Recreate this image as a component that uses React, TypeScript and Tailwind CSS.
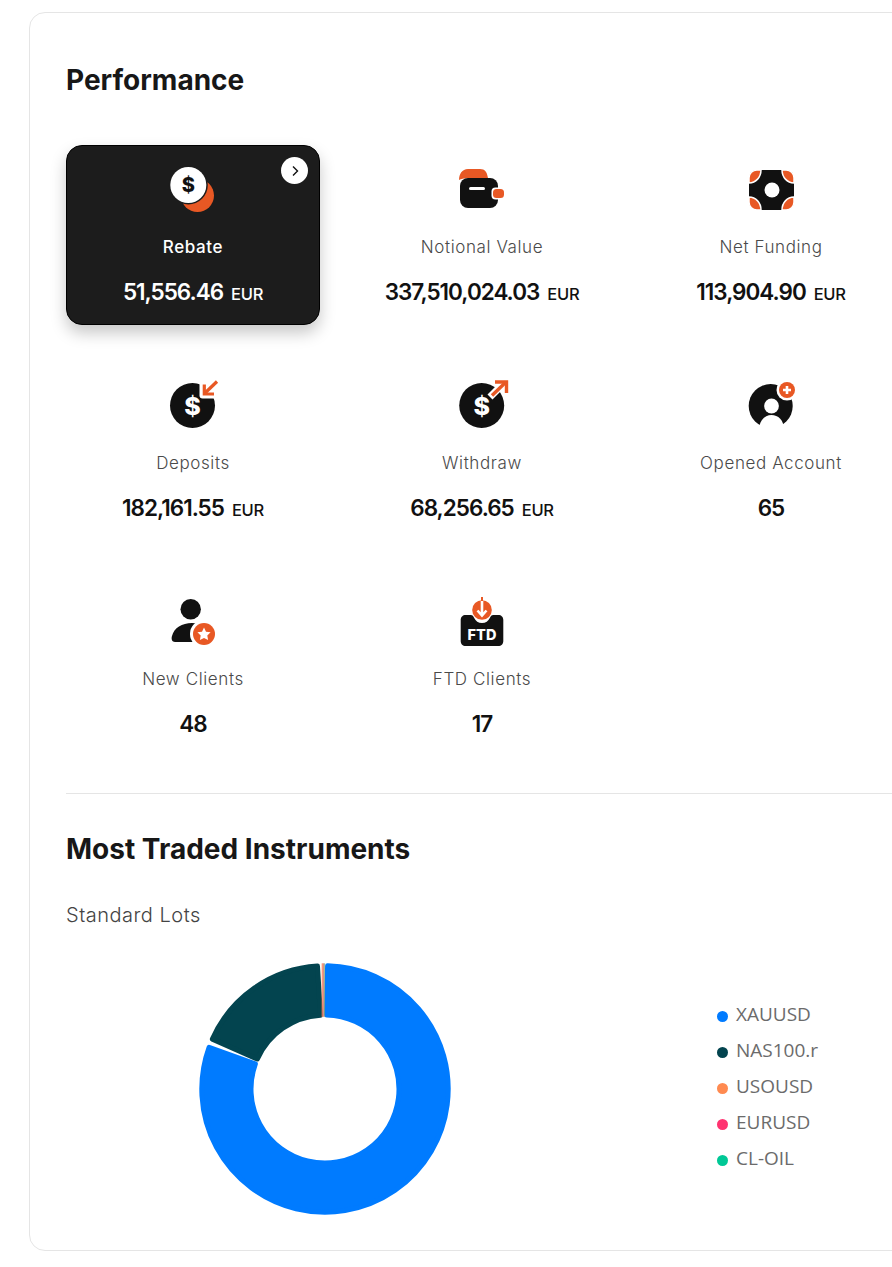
const F = "font-['Inter','Liberation_Sans',sans-serif]";

const O = "#e85824";
const K = "#111111";

function Dollar({ x, y, size, fill }: { x: number; y: number; size: number; fill: string }) {
  return (
    <text x={x} y={y} fontSize={size} fontWeight={800} textAnchor="middle" fill={fill} fontFamily="Inter, sans-serif">
      $
    </text>
  );
}

function Icon({ children }: { children: React.ReactNode }) {
  return (
    <svg width="60" height="60" viewBox="0 0 60 60" className="block shrink-0">
      {children}
    </svg>
  );
}

const corner = "M8 23V18a8 8 0 0 1 8-8H20c0 7-5 13-12 13z";

const icons: Record<string, React.ReactNode> = {
  rebate: (
    <Icon>
      <circle cx="34.500" cy="35.500" r="16.500" fill={O} />
      <circle cx="25.300" cy="25" r="19.500" fill="#1c1c1c" />
      <circle cx="25.300" cy="25" r="18" fill="#fff" />
      <Dollar x={25.3} y={32} size={20} fill={K} />
    </Icon>
  ),
  wallet: (
    <Icon>
      <path d="M7 20c0-6 3-11 9-11h12c5 0 7 3 8 9H16c-4 0-7 1-9 2z" fill={O} />
      <rect x="8" y="18" width="38" height="30" rx="8" fill={K} />
      <rect x="39.500" y="27.500" width="14" height="12" rx="4" fill="#fff" />
      <rect x="41" y="29" width="11" height="9" rx="3.500" fill={O} />
      <rect x="17" y="27" width="16" height="3" rx="1.500" fill="#fff" />
    </Icon>
  ),
  funding: (
    <Icon>
      <rect x="8" y="10" width="45" height="40" rx="8" fill={K} />
      <path d={corner} fill={O} stroke="#fff" strokeWidth="1.500" />
      <path d={corner} fill={O} stroke="#fff" strokeWidth="1.500" transform="translate(61 0) scale(-1 1)" />
      <path d={corner} fill={O} stroke="#fff" strokeWidth="1.500" transform="translate(0 60) scale(1 -1)" />
      <path d={corner} fill={O} stroke="#fff" strokeWidth="1.500" transform="translate(61 60) scale(-1 -1)" />
      <circle cx="31" cy="30" r="7.500" fill="#fff" />
    </Icon>
  ),
  deposits: (
    <Icon>
      <circle cx="29.500" cy="29.500" r="22.500" fill={K} />
      <rect x="36.500" y="2" width="22" height="20.500" rx="3" fill="#fff" />
      <Dollar x={29.5} y={38.500} size={25} fill="#fff" />
      <path d="M41.500 17.500L54 5.500" stroke={O} strokeWidth="3.200" fill="none" />
      <path d="M41.300 8.500V18H51" stroke={O} strokeWidth="3.200" fill="none" />
    </Icon>
  ),
  withdraw: (
    <Icon>
      <circle cx="29.700" cy="29.500" r="22.500" fill={K} />
      <path d="M38 21L50 9" stroke="#fff" strokeWidth="7" fill="none" />
      <Dollar x={29.7} y={38.500} size={25} fill="#fff" />
      <path d="M40 19.500L54 6" stroke={O} strokeWidth="3.400" fill="none" />
      <path d="M43 6h11.500v11" stroke={O} strokeWidth="3.400" fill="none" />
    </Icon>
  ),
  account: (
    <Icon>
      <circle cx="29.700" cy="30" r="22" fill={K} />
      <circle cx="30.500" cy="30" r="7.400" fill="#fff" />
      <path d="M18 54C18 44 24 39 30.500 39S43 44 43 54z" fill="#fff" />
      <circle cx="46" cy="14" r="10.500" fill="#fff" />
      <circle cx="46" cy="14" r="8" fill={O} />
      <path d="M42 14h8M46 10v8" stroke="#fff" strokeWidth="2.600" strokeLinecap="butt" />
    </Icon>
  ),
  clients: (
    <Icon>
      <circle cx="27.700" cy="17.300" r="10.200" fill={K} />
      <path d="M12 50c-3 0-4-3-3-6 2-8 10-13 20-13 9 0 14 3 14 8 0 6-3 11-9 11z" fill={K} />
      <circle cx="41" cy="42" r="14" fill="#fff" />
      <circle cx="41" cy="42" r="11" fill={O} />
      <path d="M41 35.500l2 4.200 4.600.6-3.300 3.200.8 4.600-4.100-2.200-4.100 2.200.8-4.600-3.300-3.200 4.600-.6z" fill="#fff" />
    </Icon>
  ),
  ftd: (
    <Icon>
      <path d="M8.700 28c0-3 2-5 5-5h5c2 0 2.500 1 3.500 3 1.500 3 4 5 7.800 5s6.300-2 7.800-5c1-2 1.500-3 3.500-3h5c3 0 5 2 5 5v21c0 3-2 5-5 5H13.700c-3 0-5-2-5-5z" fill={K} />
      <circle cx="30" cy="18" r="9.800" fill={O} />
      <path d="M30 9v14M25.500 18.500l4.500 5 4.500-5" stroke="#fff" strokeWidth="2.600" fill="none" />
      <path d="M30 5v4" stroke={O} strokeWidth="2" />
      <text x="30" y="48" textAnchor="middle" fontSize="14.500" fontWeight={800} fill="#fff" fontFamily="Inter, sans-serif">FTD</text>
    </Icon>
  ),
};

const stats = [
  { icon: "rebate", label: "Rebate", value: "51,556.46", unit: "EUR", active: true },
  { icon: "wallet", label: "Notional Value", value: "337,510,024.03", unit: "EUR" },
  { icon: "funding", label: "Net Funding", value: "113,904.90", unit: "EUR" },
  { icon: "deposits", label: "Deposits", value: "182,161.55", unit: "EUR" },
  { icon: "withdraw", label: "Withdraw", value: "68,256.65", unit: "EUR" },
  { icon: "account", label: "Opened Account", value: "65" },
  { icon: "clients", label: "New Clients", value: "48" },
  { icon: "ftd", label: "FTD Clients", value: "17" },
];

function pt(r: number, a: number) {
  const t = (a * Math.PI) / 180;
  return `${(130 + r * Math.sin(t)).toFixed(2)} ${(130 - r * Math.cos(t)).toFixed(2)}`;
}

function sector(a0: number, a1: number, ro: number, ri: number) {
  const large = a1 - a0 > 180 ? 1 : 0;
  return `M${pt(ro, a0)}A${ro} ${ro} 0 ${large} 1 ${pt(ro, a1)}L${pt(ri, a1)}A${ri} ${ri} 0 ${large} 0 ${pt(ri, a0)}Z`;
}

function Donut() {
  return (
    <svg width="260" height="260" viewBox="0 0 260 260" className="block shrink-0">
      <path d={sector(1.2, 289.8, 123.2, 74)} fill="#007bff" stroke="#007bff" strokeWidth="5" strokeLinejoin="round" />
      <path d={sector(293.9, 356.5, 123.2, 74)} fill="#03444f" stroke="#03444f" strokeWidth="5" strokeLinejoin="round" />
      <rect x="126.700" y="4.300" width="1" height="53.500" fill="#ff8a50" />
      <rect x="127.700" y="4.300" width="1" height="53.500" fill="#f5606a" />
      <rect x="128.700" y="4.300" width="1" height="53.500" fill="#7fa070" />
    </svg>
  );
}

const legend = [
  ["XAUUSD", "bg-[#007bff]"],
  ["NAS100.r", "bg-[#03444f]"],
  ["USOUSD", "bg-[#ff8a50]"],
  ["EURUSD", "bg-[#ff3370]"],
  ["CL-OIL", "bg-[#00c896]"],
];

export default function App() {
  return (
    <div className={`h-[1267px] w-[892px] overflow-hidden bg-white pl-[29px] pt-3 ${F}`}>
      <div className="h-[1239px] w-[900px] rounded-2xl border border-[#e5e5e5] pl-9 pt-[49px]">
        <h2 className="text-[28px] leading-9 font-bold text-[#171717]">Performance</h2>
        <div className="mt-[47px] grid w-[832px] grid-cols-[254px_254px_254px] gap-x-[35px] gap-y-9">
          {stats.map((s) => (
            <div
              key={s.label}
              className={`relative flex h-[180px] flex-col items-center ${
                s.active
                  ? "rounded-2xl border border-black bg-[#1c1c1c] pt-[14px] text-white shadow-[0_8px_16px_rgba(0,0,0,0.22)]"
                  : "pt-[15px] text-[#111]"
              }`}
            >
              {s.active && (
                <span className="absolute right-[11px] top-[11px] flex h-[27px] w-[27px] items-center justify-center rounded-full bg-white">
                  <svg width="12" height="12" viewBox="0 0 12 12" fill="none" stroke="#111" strokeWidth="1.4">
                    <path d="M4 1.500L8.500 6 4 10.500" />
                  </svg>
                </span>
              )}
              {icons[s.icon]}
              <div
                className={`mt-[15px] text-[17px] leading-6 tracking-[0.6px] ${
                  s.active ? "font-medium text-white" : "font-light text-[#4a4a4a]"
                }`}
              >
                {s.label}
              </div>
              <div className="mt-[19px] flex items-baseline gap-2 leading-7">
                <span className="text-[22.5px] font-semibold tracking-[-1px]">{s.value}</span>
                {s.unit && <span className="text-[16.5px] font-medium tracking-[-0.3px]">{s.unit}</span>}
              </div>
            </div>
          ))}
        </div>
        <div className="mt-9 h-px bg-[#e5e5e5]" />
        <h2 className="mt-[37px] text-[28px] leading-9 font-bold text-[#171717]">Most Traded Instruments</h2>
        <div className="mt-[36px] text-[20px] leading-6 font-light tracking-[0.5px] text-[#444]">Standard Lots</div>
        <div className="mt-[32px] flex items-start">
          <div className="ml-[129px]">
            <Donut />
          </div>
          <ul className="ml-[262px] mt-[37px] flex flex-col font-['Open_Sans',sans-serif]">
            {legend.map(([name, dot]) => (
              <li key={name} className="flex h-9 items-center gap-2 text-[19px] text-[#6b6b6b]">
                <span className={`h-[11px] w-[11px] translate-y-[2px] rounded-full ${dot}`} />
                {name}
              </li>
            ))}
          </ul>
        </div>
      </div>
    </div>
  );
}
